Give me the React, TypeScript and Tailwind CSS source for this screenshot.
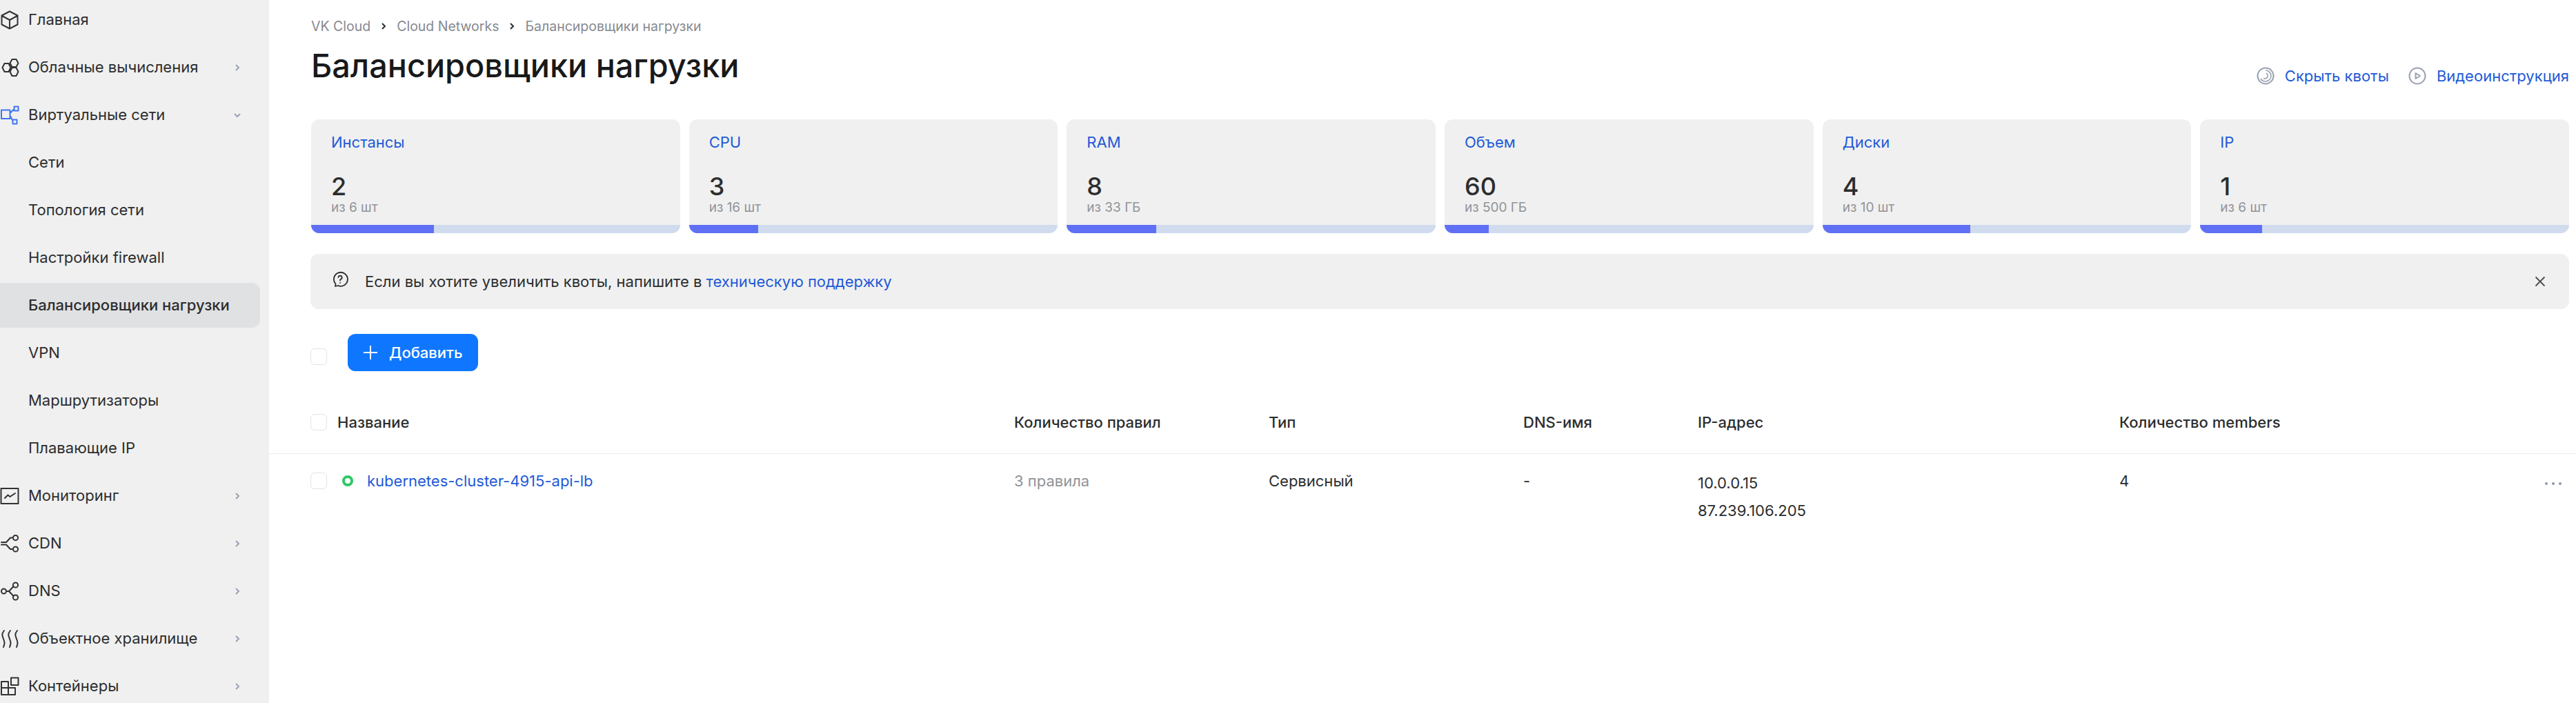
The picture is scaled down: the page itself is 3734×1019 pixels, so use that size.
import type { ReactNode } from "react";

function Ico({ children, color = "#333" }: { children: ReactNode; color?: string }) {
  return (
    <svg viewBox="0 0 28 28" className="w-[28px] h-[28px] shrink-0" fill="none" stroke={color} strokeWidth="2" strokeLinejoin="round" strokeLinecap="round">
      {children}
    </svg>
  );
}

const icons = {
  cube: (
    <Ico>
      <path d="M14 1.5 L25.5 7.5 V20.5 L14 26.5 L2.5 20.5 V7.5 Z M3 8 L14 14 L25 8 M14 14 V26" />
    </Ico>
  ),
  cloud: (
    <Ico>
      <path d="M17.5 2 h6 l3 5.5 -3 5.5 h-6 l-3 -5.5 Z M17.5 14 h6 l3 6 -3 6 h-6 l-3 -6 Z M6.5 8 h6 l3 6 -3 6 h-6 l-3 -6 Z" />
    </Ico>
  ),
  net: (
    <Ico color="#3f75f0">
      <path d="M2 6.5 H14.5 V19 H2 Z M20.5 1.5 H26.5 V7.5 H20.5 Z M18.5 20.5 H24.5 V26.5 H18.5 Z M14.5 11 L20.5 5 M14.5 14.5 L18.5 22" />
    </Ico>
  ),
  monitor: (
    <Ico>
      <path d="M1.5 3 H26.5 V25 H1.5 Z" />
      <path d="M7 17 L11.5 12.5 L14.5 15 L22 10" />
    </Ico>
  ),
  cdn: (
    <Ico>
      <circle cx="22.5" cy="5.5" r="3.6" />
      <circle cx="22.5" cy="22" r="3.6" />
      <path d="M19 5.5 H15 L9 12 H2 M2 15.5 H9 L15 22 H19" />
    </Ico>
  ),
  dns: (
    <Ico>
      <circle cx="5.5" cy="14" r="3.5" />
      <circle cx="22.5" cy="5" r="3.6" />
      <circle cx="22.5" cy="23" r="3.6" />
      <path d="M9 14 H13 L19.5 7 M13 14 L19.5 21" />
    </Ico>
  ),
  store: (
    <Ico>
      <path d="M6 2 C2 7 3 9 5 14 C7 19 7 21 5 26 M15 2 C11 7 12 9 14 14 C16 19 16 21 14 26 M25 2 C21 7 22 9 24 14 C26 19 26 21 24 26" />
    </Ico>
  ),
  box: (
    <Ico>
      <path d="M2 7 H12 V16 H2 Z M2 16 H22 V26 H2 Z M12 16 V26 M16 1.5 H26.5 V12 H16 Z" />
    </Ico>
  ),
};

type NavItem = { label: string; icon?: ReactNode; arrow?: "right" | "down"; active?: boolean };

const nav: NavItem[] = [
  { label: "Главная", icon: icons.cube },
  { label: "Облачные вычисления", icon: icons.cloud, arrow: "right" },
  { label: "Виртуальные сети", icon: icons.net, arrow: "down" },
  { label: "Сети" },
  { label: "Топология сети" },
  { label: "Настройки firewall" },
  { label: "Балансировщики нагрузки", active: true },
  { label: "VPN" },
  { label: "Маршрутизаторы" },
  { label: "Плавающие IP" },
  { label: "Мониторинг", icon: icons.monitor, arrow: "right" },
  { label: "CDN", icon: icons.cdn, arrow: "right" },
  { label: "DNS", icon: icons.dns, arrow: "right" },
  { label: "Объектное хранилище", icon: icons.store, arrow: "right" },
  { label: "Контейнеры", icon: icons.box, arrow: "right" },
];

const quotas = [
  { title: "Инстансы", value: 2, sub: "из 6 шт", pct: 33.3 },
  { title: "CPU", value: 3, sub: "из 16 шт", pct: 18.75 },
  { title: "RAM", value: 8, sub: "из 33 ГБ", pct: 24.2 },
  { title: "Объем", value: 60, sub: "из 500 ГБ", pct: 12 },
  { title: "Диски", value: 4, sub: "из 10 шт", pct: 40 },
  { title: "IP", value: 1, sub: "из 6 шт", pct: 16.7 },
];

function Chevron({ down }: { down?: boolean }) {
  return (
    <svg viewBox="0 0 12 12" className="w-[12px] h-[12px]" fill="none" stroke="#9aa3b2" strokeWidth="2">
      {down ? <path d="M2 4 L6 8 L10 4" /> : <path d="M4 2 L8 6 L4 10" />}
    </svg>
  );
}

function Crumb() {
  return (
    <svg viewBox="0 0 10 12" className="w-[10px] h-[12px] mx-[14px]" fill="none" stroke="#2c2d2e" strokeWidth="2">
      <path d="M3 2 L7 6 L3 10" />
    </svg>
  );
}

function Checkbox() {
  return <span className="block w-[24px] h-[24px] shrink-0 rounded-[6px] border border-[#e4e4e6] bg-white" />;
}

function Sidebar() {
  return (
    <aside className="w-[390px] h-[1019px] shrink-0 overflow-hidden bg-[#f0f0f0]">
      <nav className="-mt-[6px] pr-[13px]">
        {nav.map((item) => (
          <div key={item.label} className="h-[69px] flex items-center">
            <div className={`w-full h-[65px] flex items-center rounded-r-[12px] ${item.active ? "bg-[#e0e1e3] font-medium" : ""}`}>
              <span className="w-[41px] shrink-0">{item.icon}</span>
              <span className="flex-1 whitespace-nowrap text-[22px] text-[#2c2d2e]">{item.label}</span>
              {item.arrow && (
                <span className="mr-[27px]">
                  <Chevron down={item.arrow === "down"} />
                </span>
              )}
            </div>
          </div>
        ))}
      </nav>
    </aside>
  );
}

function QuotaCard({ title, value, sub, pct }: (typeof quotas)[number]) {
  return (
    <div className="flex-1 h-[165px] flex flex-col rounded-[12px] overflow-hidden bg-[#f0f0f0]">
      <div className="pl-[29px] pt-[19px] flex-1">
        <div className="h-[28px] leading-[28px] text-[22px] text-[#1f5ad6]">{title}</div>
        <div className="mt-[31px] h-[38px] leading-[38px] text-[36px] font-medium text-[#2c2d2e]">{value}</div>
        <div className="h-[24px] leading-[24px] text-[19px] text-[#919399]">{sub}</div>
      </div>
      <div className="h-[12px] bg-[#d0dcee]">
        <div className="h-full bg-[#6070f5]" style={{ width: `${pct}%` }} />
      </div>
    </div>
  );
}

export default function App() {
  return (
    <div className="flex w-[3734px] h-[1019px] overflow-hidden bg-white font-['Inter',sans-serif] text-[#2c2d2e]">
      <Sidebar />
      <main className="flex-1 min-w-0">
        {/* шапка */}
        <div className="h-[173px] pl-[61px] pr-[10px] flex justify-between">
          <div>
            <div className="pt-[26px] h-[50px] flex items-center text-[19.5px] leading-[24px] text-[#87898f]">
              <span>VK Cloud</span>
              <Crumb />
              <span>Cloud Networks</span>
              <Crumb />
              <span>Балансировщики нагрузки</span>
            </div>
            <h1 className="mt-[16px] text-[46.8px] leading-[58px] font-medium text-[#19191a]">Балансировщики нагрузки</h1>
          </div>
          <div className="pt-[96px] h-[124px] flex items-center text-[22px] leading-[28px] text-[#1f5ad6]">
            <svg viewBox="0 0 26 26" className="w-[26px] h-[26px]" fill="none" stroke="#99a2b1" strokeWidth="2">
              <circle cx="13" cy="13" r="11.5" />
              <path d="M13 5 A8 8 0 0 1 13 21 A8 8 0 0 1 6 17" strokeWidth="1.6" />
              <path d="M14 9 A4 4 0 0 1 10 16.5" strokeWidth="1.6" />
            </svg>
            <span className="ml-[15px]">Скрыть квоты</span>
            <svg viewBox="0 0 26 26" className="ml-[28px] w-[26px] h-[26px]" fill="none" stroke="#99a2b1" strokeWidth="2">
              <circle cx="13" cy="13" r="11.5" />
              <path d="M10.5 9 L17 13 L10.5 17 Z" strokeLinejoin="round" />
            </svg>
            <span className="ml-[15px]">Видеоинструкция</span>
          </div>
        </div>

        {/* квоты */}
        <div className="pl-[61px] pr-[10px] flex gap-[13px]">
          {quotas.map((q) => (
            <QuotaCard key={q.title} {...q} />
          ))}
        </div>

        {/* уведомление */}
        <div className="ml-[60px] mr-[10px] mt-[30px] h-[80px] flex items-center rounded-[12px] bg-[#f0f0f0] pl-[31px] pr-[34px]">
          <svg viewBox="0 0 24 24" className="w-[24px] h-[24px] -mt-[6px]" fill="none" stroke="#2c2d2e" strokeWidth="1.8" strokeLinecap="round" strokeLinejoin="round">
            <path d="M5 22 L5.5 18.5 A10 10 0 1 1 9 21 Z" />
            <path d="M9.5 9 A2.6 2.6 0 1 1 12.6 11.8 Q12 12.2 12 13.6 M12 16.8 V17" />
          </svg>
          <span className="ml-[24px] flex-1 text-[22px] leading-[28px]">
            Если вы хотите увеличить квоты, напишите в <span className="text-[#1f5ad6]">техническую поддержку</span>
          </span>
          <svg viewBox="0 0 16 16" className="w-[16px] h-[16px]" fill="none" stroke="#4c4d4f" strokeWidth="1.8">
            <path d="M1.5 1.5 L14.5 14.5 M14.5 1.5 L1.5 14.5" />
          </svg>
        </div>

        {/* тулбар */}
        <div className="ml-[60px] mt-[36px] h-[54px] flex items-center gap-[30px]">
          <span className="mt-[11px]">
            <Checkbox />
          </span>
          <button className="h-[54px] w-[189px] flex items-center pl-[23px] rounded-[11px] bg-[#0f77ff] text-white text-[22px] font-medium">
            <svg viewBox="0 0 20 20" className="w-[20px] h-[20px]" fill="none" stroke="white" strokeWidth="2">
              <path d="M10 0 V20 M0 10 H20" />
            </svg>
            <span className="ml-[17px]">Добавить</span>
          </button>
        </div>

        {/* таблица */}
        <div className="mt-[48px] h-[72px] pl-[61px] pr-[10px] pt-[14px] border-b border-[#ededee] grid grid-cols-[1019px_369px_369px_253px_1fr] text-[22px] leading-[24px] font-medium">
          <div className="-ml-px flex items-start gap-[15px]">
            <Checkbox />
            <span>Название</span>
          </div>
          <div>Количество правил</div>
          <div>Тип</div>
          <div>DNS-имя</div>
          <div className="flex">
            <span className="w-[611px]">IP-адрес</span>
            <span>Количество members</span>
          </div>
        </div>
        <div className="pl-[61px] pr-[10px] grid grid-cols-[1019px_369px_369px_253px_611px_1fr] pt-[27px] text-[22px] leading-[24px]">
          <div className="-ml-px flex items-start">
            <Checkbox />
            <span className="ml-[22px] mt-[4px] block w-[16px] h-[16px] rounded-full border-[4px] border-[#2ec866]" />
            <span className="ml-[20px] text-[#1f5ad6]">kubernetes-cluster-4915-api-lb</span>
          </div>
          <div className="text-[#919399]">3 правила</div>
          <div>Сервисный</div>
          <div>-</div>
          <div className="-mt-[5px] leading-[40px]">
            <div>10.0.0.15</div>
            <div>87.239.106.205</div>
          </div>
          <div className="flex justify-between items-start">
            <span>4</span>
            <span className="flex gap-[6px] pt-[14px] pr-[11px]">
              <span className="w-[4px] h-[4px] rounded-full bg-[#8f98a8]" />
              <span className="w-[4px] h-[4px] rounded-full bg-[#8f98a8]" />
              <span className="w-[4px] h-[4px] rounded-full bg-[#8f98a8]" />
            </span>
          </div>
        </div>
      </main>
    </div>
  );
}
